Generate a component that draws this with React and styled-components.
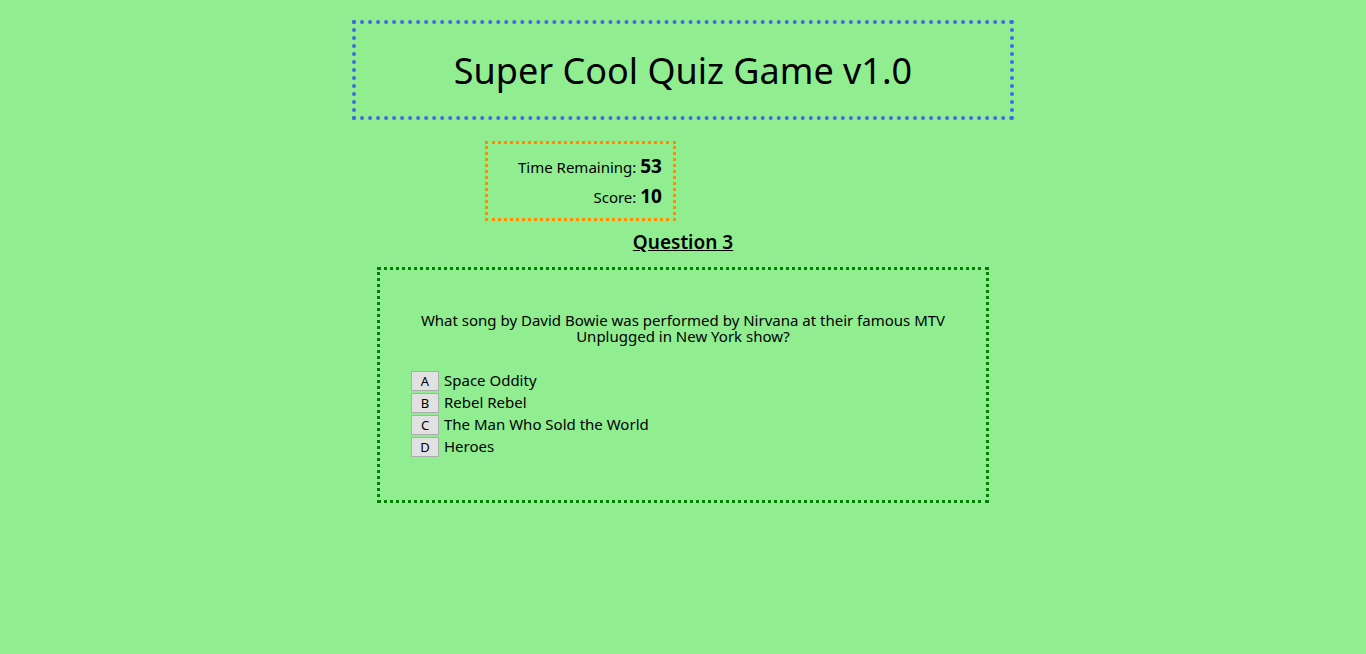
import React, { useState } from "react";
import styled, { createGlobalStyle } from "styled-components";

const GlobalStyle = createGlobalStyle`
  * { box-sizing: border-box; }
  body {
    margin: 0;
    background: lightgreen;
    color: #000;
    font-family: "Segoe UI", "Noto Sans", "Open Sans", sans-serif;
    font-size: 15px;
    line-height: 16px;
  }
`;

const Page = styled.main`
  display: flex;
  flex-direction: column;
  align-items: center;
  padding: 20px 16px;
`;

const Banner = styled.header`
  width: 100%;
  max-width: 662px;
  padding: 27px 20px 25px;
  border: 4px dotted royalblue;
  text-align: center;
`;

const Title = styled.h1`
  margin: 0;
  font-size: 36px;
  font-weight: 400;
  line-height: 40px;
`;

const Content = styled.div`
  display: flex;
  flex-direction: column;
  width: 100%;
  max-width: 612px;
  padding-top: 21px;
`;

const Scoreboard = styled.section`
  width: 191px;
  margin-left: 108px;
  padding: 8px 11px 6px;
  border: 3px dotted darkorange;
  text-align: right;
`;

const Stat = styled.p`
  margin: 0;
  line-height: 30px;
`;

const StatValue = styled.strong`
  font-size: 19px;
  font-weight: 700;
  line-height: 20px;
`;

const QuestionTitle = styled.h2`
  margin: 11px 0 15px;
  font-size: 19px;
  font-weight: 600;
  line-height: 20px;
  text-align: center;
  text-decoration: underline;
`;

const QuestionBox = styled.section`
  padding: 42px 31px 43px;
  border: 3px dotted green;
`;

const Prompt = styled.p`
  margin: 0 0 27px;
  text-align: center;
`;

const Answers = styled.ul`
  display: flex;
  flex-direction: column;
  gap: 2px;
  margin: 0;
  padding: 0;
  list-style: none;
`;

const Answer = styled.li`
  display: flex;
  align-items: flex-start;
  gap: 5px;
  line-height: 18px;
`;

const AnswerButton = styled.button`
  width: 28px;
  height: 20px;
  padding: 0;
  border: 1px solid #adadad;
  background: #e1e1e1;
  color: #000;
  font-family: inherit;
  font-size: 13px;
  line-height: 18px;
`;

const answers = [
  ["A", "Space Oddity"],
  ["B", "Rebel Rebel"],
  ["C", "The Man Who Sold the World"],
  ["D", "Heroes"],
];

export default function App() {
  const [, setChoice] = useState(null);

  return (
    <>
      <GlobalStyle />
      <Page>
        <Banner>
          <Title>Super Cool Quiz Game v1.0</Title>
        </Banner>
        <Content>
          <Scoreboard>
            <Stat>Time Remaining: <StatValue>53</StatValue></Stat>
            <Stat>Score: <StatValue>10</StatValue></Stat>
          </Scoreboard>
          <QuestionTitle>Question 3</QuestionTitle>
          <QuestionBox>
            <Prompt>
              What song by David Bowie was performed by Nirvana at their famous MTV Unplugged in New York show?
            </Prompt>
            <Answers>
              {answers.map(([letter, text]) => (
                <Answer key={letter}>
                  <AnswerButton
                    type="button"
                    aria-labelledby={`letter-${letter} answer-${letter}`}
                    id={`letter-${letter}`}
                    onClick={() => setChoice(letter)}
                  >
                    {letter}
                  </AnswerButton>
                  <span id={`answer-${letter}`}>{text}</span>
                </Answer>
              ))}
            </Answers>
          </QuestionBox>
        </Content>
      </Page>
    </>
  );
}
